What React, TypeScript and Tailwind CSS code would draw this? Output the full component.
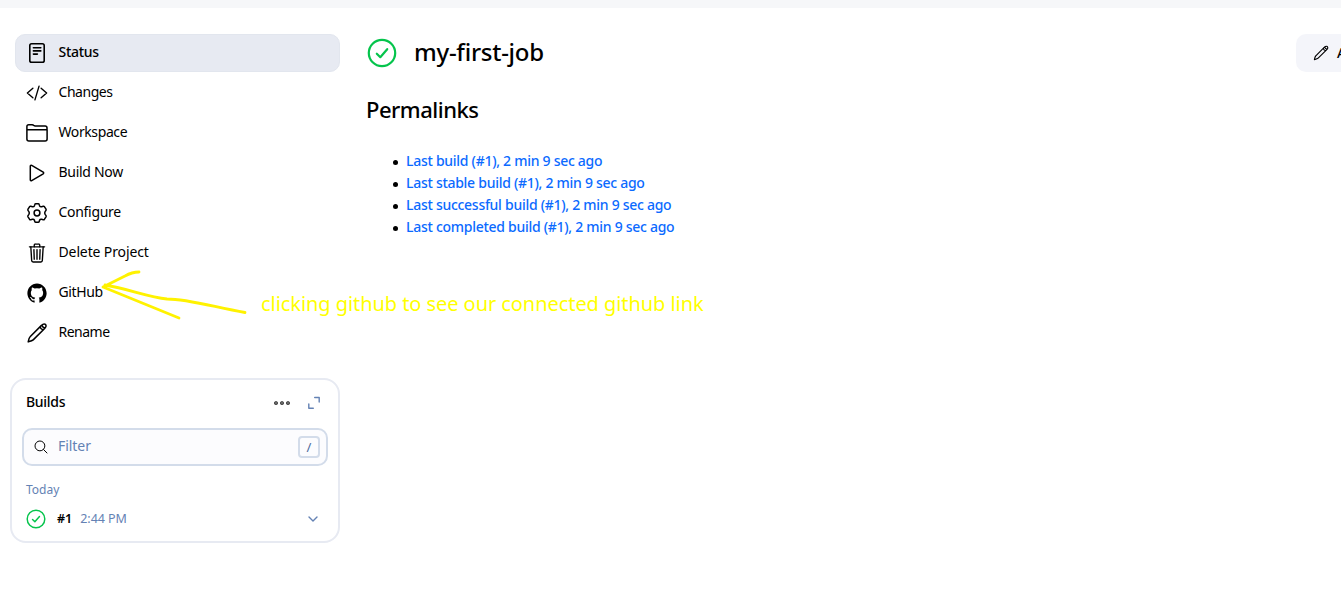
import type { ReactNode } from "react";
import { IoCodeSlashOutline, IoTrashOutline, IoLogoGithub, IoSearchOutline } from "react-icons/io5";

function StatusIcon() {
  return (
    <svg viewBox="0 0 24 24" className="size-6" fill="none" stroke="currentColor" strokeWidth="1.6" strokeLinecap="round" strokeLinejoin="round">
      <rect x="4.8" y="2.8" width="14.4" height="18.4" rx="1.8" />
      <path d="M8.4 6.7h7.4M8.4 9.9h7.4M8.4 13.1h4" />
    </svg>
  );
}

function FolderIcon() {
  return (
    <svg viewBox="0 0 24 24" className="size-6" fill="none" stroke="currentColor" strokeWidth="1.5" strokeLinejoin="round">
      <path d="M1.900 9V5.600q0-1.800 1.800-1.800h3.500q.8 0 1.500.6.700.5 1.500.5h9.900q1.900 0 1.900 1.800V9M1.900 8.700h20.200v9.200q0 2-2 2H3.900q-2 0-2-2z" />
    </svg>
  );
}

function PlayIcon() {
  return (
    <svg viewBox="0 0 24 24" className="size-6" fill="none" stroke="currentColor" strokeWidth="1.5" strokeLinejoin="round">
      <path d="M5.300 5.200v13.600c0 .9.700 1.200 1.400.8l11.500-6.800c.6-.4.6-1.200 0-1.600L6.700 4.400c-.7-.4-1.400-.1-1.400.8z" />
    </svg>
  );
}

function GearIcon() {
  return (
    <svg viewBox="0 0 24 24" className="size-6" fill="none" stroke="currentColor" strokeWidth="1.5" strokeLinejoin="round">
      <circle cx="12" cy="12" r="2.9" />
      <path d="M10.800 2.700h2.400q.8 0 1 .8l.4 1.300q.6 1.200 2 .9l1.600-.4q.8-.2 1.300.5l1.500 2.400q.4.8-.1 1.400l-.8 1q-.8 1.400 0 2.800l.8 1q.5.600.1 1.400l-1.500 2.400q-.5.7-1.300.5l-1.600-.4q-1.400-.3-2 .9l-.4 1.300q-.2.8-1 .8h-2.400q-.8 0-1-.8l-.4-1.300q-.6-1.200-2-.9l-1.600.4q-.8.200-1.300-.5L3 15.800q-.4-.8.100-1.400l.8-1q.8-1.400 0-2.800l-.8-1Q2.600 9 3 8.200l1.500-2.400q.5-.7 1.300-.5l1.600.4q1.400.300 2-.9l.4-1.300q.2-.8 1-.8z" />
    </svg>
  );
}

function PencilIcon({ className }: { className: string }) {
  return (
    <svg viewBox="0 0 24 24" className={className} fill="none" stroke="currentColor" strokeWidth="1.5" strokeLinejoin="round" strokeLinecap="round">
      <path d="M16.200 4.600q2.600-2.500 4.200-1.200 1.700 1.700-1 4.400L8.200 18.900q-.8.8-5 2 .8-4.200 1.900-5.200zM15 5.800q.6 2.300 3.200 3.200M17 3.900q.3 2.500 3 3.200" />
    </svg>
  );
}

function SuccessIcon({ className }: { className: string }) {
  return (
    <svg viewBox="0 0 30 30" className={className} fill="none" stroke="#05c44c" strokeWidth="2.200" strokeLinecap="round" strokeLinejoin="round">
      <circle cx="15" cy="15" r="13.2" />
      <path d="m9.800 15.700 3.500 3.500 6.900-8" />
    </svg>
  );
}

const tasks: { label: string; icon: ReactNode; spacing: string }[] = [
  { label: "Status", icon: <StatusIcon />, spacing: "tracking-[-0.3px]" },
  { label: "Changes", icon: <IoCodeSlashOutline className="size-[22px] stroke-[34px]" />, spacing: "tracking-[-0.450px]" },
  { label: "Workspace", icon: <FolderIcon />, spacing: "tracking-[-0.400px]" },
  { label: "Build Now", icon: <PlayIcon />, spacing: "tracking-[-0.3px]" },
  { label: "Configure", icon: <GearIcon />, spacing: "tracking-[-0.3px]" },
  { label: "Delete Project", icon: <IoTrashOutline className="size-[22px]" />, spacing: "tracking-[-0.120px]" },
  { label: "GitHub", icon: <IoLogoGithub className="size-[22px]" />, spacing: "tracking-[-0.400px]" },
  { label: "Rename", icon: <PencilIcon className="size-6" />, spacing: "tracking-[-0.500px]" },
];

const links = [
  "Last build (#1), 2 min 9 sec ago",
  "Last stable build (#1), 2 min 9 sec ago",
  "Last successful build (#1), 2 min 9 sec ago",
  "Last completed build (#1), 2 min 9 sec ago",
];

function Builds() {
  return (
    <section className="mt-[26px] -ml-[5px] h-[165px] w-[330px] rounded-[16px] border-2 border-[#e7eaf2] px-2.5">
      <header className="flex h-[44px] items-center pr-[7px] pl-1">
        <h2 className="flex-1 text-sm font-medium tracking-[-0.3px]">Builds</h2>
        <svg width="18" height="8" fill="none" stroke="currentColor" strokeWidth="1.1" className="mt-0.5 mr-[16px]">
          <circle cx="3" cy="4" r="1.300" /><circle cx="9" cy="4" r="1.300" /><circle cx="15" cy="4" r="1.300" />
        </svg>
        <svg width="14" height="14" fill="none" stroke="#6482b4" strokeWidth="1.4" strokeLinecap="round" strokeLinejoin="round" className="mt-0.5">
          <path d="M7.700 1.500h4.500v4.500M1.800 8v4.200h4.500" />
        </svg>
      </header>
      <div className="mt-1 flex h-[38px] items-center rounded-[10px] border-2 border-[#d3dcea] bg-[#fcfcfe] pr-1.5 pl-[9px]">
        <IoSearchOutline className="size-4" />
        <span className="ml-[9px] flex-1 pb-0.5 text-sm tracking-[-0.050px] text-[#6482b4]">Filter</span>
        <span className="flex size-[22px] items-center justify-center rounded border-2 border-[#d3dcea] text-[#4d6b9e]">
          <span className="text-[13px] leading-none">/</span>
        </span>
      </div>
      <p className="mt-[14px] pl-1 text-xs leading-5 text-[#6482b4]">Today</p>
      <div className="mt-[9px] flex h-5 items-center pl-1 text-[12.500px]">
        <SuccessIcon className="size-5" />
        <span className="ml-[11px] font-semibold">#1</span>
        <span className="ml-2 flex-1 tracking-[-0.050px] text-[#6482b4]">2:44 PM</span>
        <svg width="10" height="6" fill="none" stroke="#6482b4" strokeWidth="1.400" strokeLinecap="round" strokeLinejoin="round" className="mr-[10px]"><path d="m1 1 4 4 4-4" /></svg>
      </div>
    </section>
  );
}

export default function App() {
  return (
    <div className="relative h-[601px] w-full overflow-hidden bg-white font-['Noto_Sans',sans-serif] text-black">
      <div className="h-2 bg-[#f6f7f9]" />
      <div className="flex pt-[26px] pl-[15px]">
        <aside className="w-[325px] shrink-0">
          <nav className="flex flex-col gap-0.5">
            {tasks.map((t, i) => (
              <a key={t.label} className={i === 0 ? "flex h-[38px] items-center rounded-[10px] border border-[#e2e6ee] bg-[#e7eaf2] pl-[9px] text-sm font-medium" : "flex h-[38px] items-center pl-2.5 text-sm"}>
                <span className="flex size-6 items-center justify-center">{t.icon}</span>
                <span className={"ml-[9.500px] pb-0.5 " + t.spacing}>{t.label}</span>
              </a>
            ))}
          </nav>
          <Builds />
        </aside>
        <main className="ml-[26px] min-w-0 flex-1">
          <div className="flex h-[38px] items-center">
            <SuccessIcon className="ml-px size-[30px] shrink-0" />
            <h1 className="ml-[17px] flex-1 pb-0.5 text-2xl font-medium tracking-[-0.250px]">my-first-job</h1>
            <button className="flex h-[38px] w-[45px] shrink-0 items-center overflow-hidden rounded-l-[10px] bg-[#f4f5fa] pl-4 text-sm font-medium whitespace-nowrap">
              <PencilIcon className="size-[18px] shrink-0" />
              <span className="ml-[7px]">Add description</span>
            </button>
          </div>
          <h2 className="mt-[21px] text-[22px] leading-8 font-medium tracking-[-0.5px]">Permalinks</h2>
          <ul className="mt-[25px] pl-[27px] text-sm leading-[22px]">
            {links.map((l) => (
              <li key={l} className="flex items-center">
                <span className="mt-0.5 mr-2 size-[5px] rounded-full bg-black" />
                <a className="font-medium tracking-[-0.280px] text-[#0b6aff]">{l}</a>
              </li>
            ))}
          </ul>
        </main>
      </div>
      <svg className="absolute top-[260px] left-[90px]" width="170" height="70" fill="none" stroke="#fff200" strokeWidth="2.800" strokeLinecap="round" strokeLinejoin="round">
        <path d="M49 12q-7 0-14 4L13 27 89 58M15 25c24 4 43 12 62 14 21 0 47 8 78 13.500" />
      </svg>
      <p className="absolute top-[288px] left-[261px] text-[20px] leading-8 tracking-[-0.060px] whitespace-nowrap text-[#ffff00]">clicking github to see our connected github link</p>
    </div>
  );
}
